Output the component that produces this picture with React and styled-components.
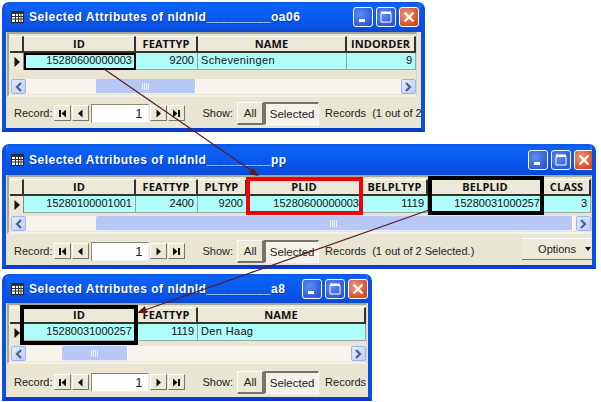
import React from "react";
import styled, { createGlobalStyle } from "styled-components";

const Global = createGlobalStyle`
  html, body { margin: 0; padding: 0; background: #fff; }
  #root { width: 601px; height: 402px; }
`;
const Page = styled.div`
  position: relative; width: 601px; height: 402px; overflow: hidden; background: #fff;
  font-family: "Liberation Sans", Arial, sans-serif;
`;
const dither = `
  background-color: #ece9d8;
  background-image: repeating-conic-gradient(#ece9d8 0 25%, #e5e2ce 0 50%);
  background-size: 2px 2px;
`;
const Win = styled.section`
  position: absolute; left: 2px; top: ${p => p.$top}px; width: ${p => p.$w}px; height: ${p => p.$h}px;
  box-sizing: border-box; display: flex; flex-direction: column;
  ${dither}
  border-radius: 7px 7px 0 0;
  border: solid #0a50e4; border-width: 0 4px 4px 4px; border-bottom-color: #0b3bc8;
  overflow: hidden;
`;
const TitleBar = styled.header`
  height: ${p => p.$h}px; flex: none; margin: 0 -4px; padding: 0 ${p => p.$pr}px 0 9px;
  display: flex; align-items: center; gap: 3px;
  background: linear-gradient(180deg, #0a58e8 0%, #0d62f4 12%, #0a5aee 50%, #0850e2 85%, #0a48d0 100%);
`;
const TitleText = styled.h1`
  flex: 1; min-width: 0; margin: 0 0 0 2px; color: #fff; font: bold 12px "Liberation Sans", Arial, sans-serif;
  letter-spacing: .5px; white-space: nowrap; text-shadow: 1px 1px 0 #0a3ba8;
`;
const WinBtn = styled.span`
  width: 20px; height: 20px; box-sizing: border-box; flex: none; border: 1px solid #fff; border-radius: 3px;
  display: grid; place-items: center;
  background: ${p => p.$close ? "radial-gradient(circle at 35% 35%, #ec9a7c, #d84a20 75%)" : "radial-gradient(circle at 35% 35%, #5f8df0, #2a55d8 80%)"};
`;
const Frame = styled.div`
  margin: 0 ${p => p.$mr}px 0 1px; flex: none; border: solid #a9a695; border-width: 2px 1px 2px 2px; border-right-color: #d8d4c4; border-bottom-color: #f4f2e8;
  padding: ${p => p.$pt}px 0 1px 1px; overflow: hidden;
`;
const Row = styled.div`
  display: flex; height: ${p => p.$h}px;
`;
const Corner = styled.div`
  width: 14px; flex: none; box-sizing: border-box; background: #ece9d8;
  border-right: 2px solid #35342c; border-bottom: 2px solid #35342c; border-top: 1px solid #fff;
`;
const RowHead = styled.div`
  width: 14px; flex: none; box-sizing: border-box; background: #ece9d8; display: grid; place-items: center;
  border-right: 1px solid #888;
`;
const HeadCell = styled.div`
  width: ${p => p.$w}px; flex: none; box-sizing: border-box; text-align: center;
  font: bold 11px/14px "Open Sans", "DejaVu Sans", sans-serif; color: #111; letter-spacing: .1px;
  background: #ece9d8; border-right: 2px solid #35342c; border-bottom: 2px solid #35342c; border-top: 1px solid #fff; overflow: hidden;
`;
const DataCell = styled.div`
  width: ${p => p.$w}px; flex: none; box-sizing: border-box; padding: 0 3px;
  text-align: ${p => p.$left ? "left" : "right"};
  font-size: 11px; line-height: 15px; color: #111; white-space: nowrap; letter-spacing: ${p => p.$left ? ".35px" : "0"};
  background: #aefdfb; border-right: 1px solid #97a8a4; border-bottom: 1px solid #97a8a4; overflow: hidden;
`;
const ScrollBar = styled.div`
  margin: ${p => p.$mt}px 0 0 1px; height: 15px; display: flex; align-items: stretch;
  background: #f6f4ec;
`;
const ScrollBtn = styled.span`
  width: 15px; flex: none; box-sizing: border-box; display: grid; place-items: center;
  background: linear-gradient(135deg, #e4ebfd, #bccdf7); border: 1px solid #9fb4e8; border-radius: 2px;
`;
const Track = styled.div`
  flex: 1; display: flex; padding-left: ${p => p.$start}px;
`;
const Thumb = styled.span`
  width: ${p => p.$w}px; flex: none; box-sizing: border-box; display: grid; place-items: center;
  background: #b8c8f6; border-right: 1px solid #fff; border-bottom: 1px solid #e8edfb; border-radius: 2px;
`;
const Toolbar = styled.div`
  display: flex; align-items: center; height: 24px; margin: ${p => p.$mt}px 0 0 3px;
  font-size: 11px; color: #222; white-space: pre;
`;
const Label = styled.span`
  margin-left: ${p => p.$ml || 0}px; margin-right: ${p => p.$mr || 0}px; flex: none;
`;
const NavBtn = styled.span`
  width: 17px; height: 16px; flex: none; margin-right: 1px; display: grid; place-items: center;
  background: #ece9d8; border: 1px solid; border-color: #fff #77756a #77756a #fff; box-sizing: border-box;
`;
const RecordInput = styled.span`
  width: 58px; height: 19px; margin: 0 1px; flex: none; box-sizing: border-box; background: #fff; text-align: right; padding: 0 5px;
  font-size: 13px; line-height: 17px; border: 1px solid; border-color: #8a8878 #eee #eee #8a8878;
`;
const Toggle = styled.span`
  height: 23px; width: ${p => p.$w}px; flex: none; box-sizing: border-box; display: grid; place-items: center;
  border: 1px solid; font-size: 11.5px;
  border-color: ${p => p.$on ? "#77756a #fff #fff #77756a" : "#fff #77756a #77756a #fff"};
  border-width: ${p => p.$on ? "2px 1px 1px 2px" : "1px 2px 2px 1px"};
  background: ${p => p.$on ? "#f4f2ea" : "#ece9d8"};
`;
const Options = styled.span`
  position: absolute; right: -3px; bottom: 5px; width: 73px; height: 22px; box-sizing: border-box;
  display: flex; align-items: center; justify-content: flex-end; gap: 9px; padding-right: 3px;
  font-size: 11px; color: #222; background: #ece9d8; border-bottom: 1px solid #77756a; border-right: 1px solid #77756a; border-top: 1px solid #fff;
`;
const Highlight = styled.div`
  position: absolute; box-sizing: border-box;
  left: ${p => p.$x}px; top: ${p => p.$y}px; width: ${p => p.$w}px; height: ${p => p.$h}px;
  border: ${p => p.$t || 4}px solid ${p => p.$c || "#000"};
`;
const Arrows = styled.svg`
  position: absolute; left: 0; top: 0; pointer-events: none;
`;

const TableIcon = () => (
  <svg width="13" height="12" viewBox="0 0 13 12" style={{ flex: "none" }}>
    <rect x=".5" y=".5" width="12" height="11" fill="#fff" stroke="#222" />
    <rect x="1" y="1" width="11" height="2" fill="#333" />
    <path d="M1 5.5h11M1 8h11M4.5 3v8M7.5 3v8M10 3v8" stroke="#333" fill="none" />
  </svg>
);
const Glyph = ({ d }) => (
  <svg width="9" height="9" viewBox="0 0 9 9"><path d={d} fill="#111" /></svg>
);
const FIRST = "M1 1h2v7H1zM8 0.5v8L3.5 4.5z";
const PREV = "M6.5 0.5v8L2 4.5z";
const NEXT = "M2.5 0.5v8L7 4.5z";
const LAST = "M6 1h2v7H6zM1 0.5v8l4.5-4z";

const Grip = () => (
  <svg width="8" height="7" viewBox="0 0 8 7"><path d="M.5 0v7M2.5 0v7M4.5 0v7M6.5 0v7" stroke="#eef2fd" /></svg>
);
const Chev = ({ right }) => (
  <svg width="9" height="10" viewBox="0 0 9 10">
    <path d={right ? "M2 1l4 4-4 4" : "M7 1L3 5l4 4"} fill="none" stroke="#4d6185" strokeWidth="2.2" />
  </svg>
);

function Window({ top, w, h, name, titleH, titlePr, frameMr, pt, gap, toolMt, cols, cells, start, thumb, recordsText, options }) {
  return (
    <Win $top={top} $w={w} $h={h}>
      <TitleBar $h={titleH} $pr={titlePr}>
        <TableIcon />
        <TitleText>Selected Attributes of {name}</TitleText>
        <WinBtn>
          <svg width="10" height="10" viewBox="0 0 10 10"><rect x="1" y="7" width="6" height="3" fill="#fff" /></svg>
        </WinBtn>
        <WinBtn>
          <svg width="12" height="12" viewBox="0 0 12 12"><path d="M1 2.5h10V11H1z" fill="none" stroke="#fff" /><path d="M1 1.5h10" stroke="#fff" strokeWidth="2" /></svg>
        </WinBtn>
        <WinBtn $close>
          <svg width="12" height="12" viewBox="0 0 12 12"><path d="M1.5 1.5l9 9M10.5 1.5l-9 9" stroke="#fff" strokeWidth="2.2" /></svg>
        </WinBtn>
      </TitleBar>
      <Frame $mr={frameMr} $pt={pt}>
        <Row $h={17}>
          <Corner />
          {cols.map(c => <HeadCell key={c.t} $w={c.w}>{c.t}</HeadCell>)}
        </Row>
        <Row $h={17}>
          <RowHead>
            <svg width="8" height="10" viewBox="0 0 8 10"><path d="M1.5 0v10L7 5z" fill="#111" /></svg>
          </RowHead>
          {cols.map((c, i) => <DataCell key={c.t} $w={c.w} $left={c.left}>{cells[i]}</DataCell>)}
        </Row>
        <ScrollBar $mt={gap}>
          <ScrollBtn><Chev /></ScrollBtn>
          <Track $start={start}>
            <Thumb $w={thumb}><Grip /></Thumb>
          </Track>
          <ScrollBtn><Chev right /></ScrollBtn>
        </ScrollBar>
      </Frame>
      <Toolbar $mt={toolMt}>
        <Label $ml={5} $mr={1}>Record:</Label>
        <NavBtn><Glyph d={FIRST} /></NavBtn>
        <NavBtn><Glyph d={PREV} /></NavBtn>
        <RecordInput>1</RecordInput>
        <NavBtn><Glyph d={NEXT} /></NavBtn>
        <NavBtn><Glyph d={LAST} /></NavBtn>
        <Label $ml={17} $mr={4}>Show:</Label>
        <Toggle $w={27}>All</Toggle>
        <Toggle $w={55} $on>Selected</Toggle>
        <Label $ml={6}>{recordsText}</Label>
      </Toolbar>
      {options && (
        <Options>
          Options
          <svg width="6" height="4" viewBox="0 0 6 4"><path d="M0 0h6L3 4z" fill="#111" /></svg>
        </Options>
      )}
    </Win>
  );
}

export default function App() {
  return (
    <Page>
      <Global />
      <Window
        top={2} w={423} h={130} titleH={30} titlePr={6} frameMr={4} pt={2} gap={9} toolMt={4}
        name="nldnld_________oa06"
        cols={[{ t: "ID", w: 112 }, { t: "FEATTYP", w: 62 }, { t: "NAME", w: 149, left: true }, { t: "INDORDER", w: 69 }]}
        cells={["15280600000003", "9200", "Scheveningen", "9"]}
        start={70} thumb={100} recordsText="Records  (1 out of 2"
      />
      <Window
        top={144} w={594} h={125} titleH={31} titlePr={2} frameMr={0} pt={2} gap={3} toolMt={5}
        name="nldnld_________pp"
        cols={[{ t: "ID", w: 112 }, { t: "FEATTYP", w: 62 }, { t: "PLTYP", w: 49 }, { t: "PLID", w: 116 }, { t: "BELPLTYP", w: 65 }, { t: "BELPLID", w: 116 }, { t: "CLASS", w: 47 }]}
        cells={["15280100001001", "2400", "9200", "15280600000003", "1119", "15280031000257", "3"]}
        start={70} thumb={477} recordsText="Records  (1 out of 2 Selected.)" options
      />
      <Window
        top={274} w={370} h={127} titleH={29} titlePr={4} frameMr={1} pt={2} gap={5} toolMt={6}
        name="nldnld_________a8"
        cols={[{ t: "ID", w: 112 }, { t: "FEATTYP", w: 62 }, { t: "NAME", w: 168, left: true }]}
        cells={["15280031000257", "1119", "Den Haag"]}
        start={36} thumb={66} recordsText="Records"
      />
      <Highlight $x={24} $y={53} $w={112} $h={17} $t={2} />
      <Highlight $x={246} $y={177} $w={117} $h={38} $c="#f0040c" />
      <Highlight $x={428} $y={176} $w={116} $h={39} />
      <Highlight $x={20} $y={305} $w={118} $h={40} />
      <Arrows width="601" height="402" viewBox="0 0 601 402">
        <path d="M104 69L252 171" stroke="#5b1a22" strokeWidth="1.2" fill="none" />
        <path d="M259 176l-10-2 4-6z" fill="#5b1a22" />
        <path d="M429 210L145 310" stroke="#5b1a22" strokeWidth="1.2" fill="none" />
        <path d="M137 313l8-7 2 7z" fill="#5b1a22" />
      </Arrows>
    </Page>
  );
}
